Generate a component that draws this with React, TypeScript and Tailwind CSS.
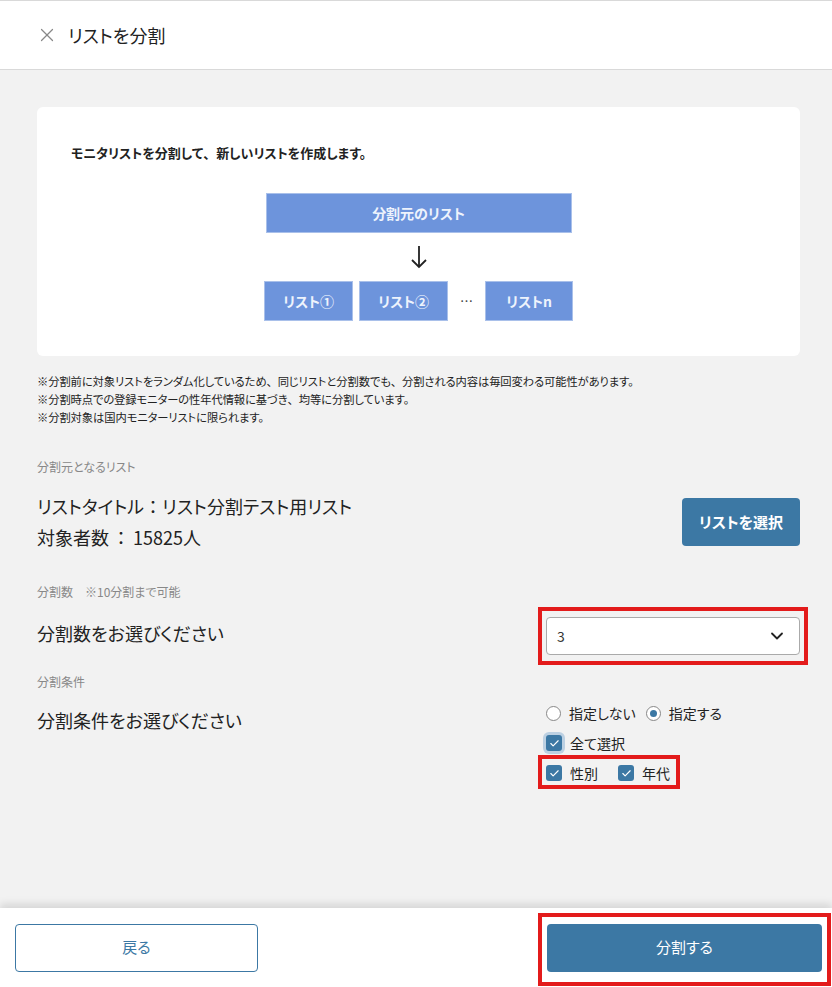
import { X, ChevronDown, Check } from 'lucide-react';

// full-width punctuation kept at full width while the rest uses proportional kana
const P = ({ c }: { c: string }) => <span className="[font-feature-settings:normal]">{c}</span>;

const Box = ({ label, className }: { label: string; className: string }) => (
  <div
    className={`flex items-center justify-center bg-[#6d94dc] border border-[#a9c0ea] text-[14px] font-bold text-[#eef3fc] ${className}`}
  >
    {label}
  </div>
);

const CheckBox = ({ ring }: { ring?: boolean }) => (
  <span
    className={`flex h-[16px] w-[16px] items-center justify-center rounded-[3px] bg-[#3c78a4] ${
      ring ? 'ring-[3px] ring-[#bcd0e2]' : ''
    }`}
  >
    <Check size={11} strokeWidth={2.5} className="text-white" />
  </span>
);

const App = () => {
  return (
    <div
      className="flex h-[987px] w-[832px] flex-col bg-[#f2f2f2] text-[#222] [font-feature-settings:'palt']"
      style={{ fontFamily: '"Noto Sans CJK JP", "Noto Sans", sans-serif' }}
    >
      <header className="flex h-[70px] items-center border-t border-b border-[#d9d9d9] bg-white pl-[36px]">
        <X size={22} strokeWidth={1.3} className="text-[#888]" />
        <h1 className="ml-[10px] text-[18px] leading-none">リストを分割</h1>
      </header>

      <main className="flex-1 pl-[37px] pr-[32px] pt-[37px]">
        <div className="h-[249px] rounded-[6px] bg-white pl-[34px] pt-[36px]">
          <p className="text-[13px] font-bold leading-[20px]">
            モニタリストを分割して<P c="、" />新しいリストを作成します。
          </p>
          <div className="mt-[30px] flex flex-col items-center pr-[34px]">
            <Box label="分割元のリスト" className="h-[40px] w-[306px]" />
            <svg width="18" height="26" viewBox="0 0 18 26" className="my-[11px]">
              <path d="M9 2 V23 M2 16 L9 23 L16 16" stroke="#222" strokeWidth="1.8" fill="none" />
            </svg>
            <div className="flex items-center">
              <Box label="リスト①" className="h-[40px] w-[89px]" />
              <Box label="リスト②" className="ml-[6px] h-[40px] w-[89px]" />
              <span className="mx-[12px] text-[13px] text-[#444]">…</span>
              <Box label="リストn" className="h-[40px] w-[88px]" />
            </div>
          </div>
        </div>

        <div className="mt-[16px] text-[11.3px] leading-[18px] tracking-[-0.1px]">
          <p>
            ※分割前に対象リストをランダム化しているため<P c="、" />同じリストと分割数でも<P c="、" />
            分割される内容は毎回変わる可能性があります。
          </p>
          <p>
            ※分割時点での登録モニターの性年代情報に基づき<P c="、" />均等に分割しています。
          </p>
          <p>※分割対象は国内モニターリストに限られます。</p>
        </div>

        <p className="mt-[32px] text-[12px] leading-[18px] text-[#888]">分割元となるリスト</p>
        <div className="mt-[15px] flex items-center justify-between">
          <div className="text-[18px] leading-[31px]">
            <p>
              リストタイトル<P c="：" />リスト分割テスト用リスト
            </p>
            <p>
              対象者数<span className="mx-[3px]"><P c="：" /></span>15825人
            </p>
          </div>
          <button className="h-[48px] w-[118px] rounded-[4px] bg-[#3c78a4] text-[15px] font-bold text-white">
            リストを選択
          </button>
        </div>

        <p className="mt-[30px] text-[12px] leading-[18px] text-[#888]">
          分割数<span className="ml-[12px]">※10分割まで可能</span>
        </p>
        <div className="mt-[16px] flex items-center justify-between">
          <p className="-mt-[6px] text-[18px] leading-[28px]">分割数をお選びください</p>
          <div className="relative w-[254px]">
            <div className="flex h-[38px] items-center justify-between rounded-[4px] border border-[#aaa] bg-white pl-[10px] pr-[12px]">
              <span className="text-[14px] text-[#333]">3</span>
              <ChevronDown size={20} strokeWidth={2.2} className="text-[#222]" />
            </div>
            <div className="pointer-events-none absolute -inset-x-[8px] -inset-y-[10px] border-4 border-[#e31b1b]" />
          </div>
        </div>

        <p className="mt-[18px] text-[12px] leading-[18px] text-[#888]">分割条件</p>
        <div className="mt-[11px] flex items-start justify-between">
          <p className="mt-[4px] text-[18px] leading-[28px]">分割条件をお選びください</p>
          <div className="flex w-[254px] flex-col gap-[8px] text-[14px]">
            <div className="flex h-[22px] items-center">
              <span className="h-[15px] w-[15px] rounded-full border border-[#888] bg-white" />
              <span className="ml-[8px]">指定しない</span>
              <span className="ml-[10px] flex h-[15px] w-[15px] items-center justify-center rounded-full border border-[#888] bg-white">
                <span className="h-[7px] w-[7px] rounded-full bg-[#3c78a4]" />
              </span>
              <span className="ml-[8px]">指定する</span>
            </div>
            <div className="flex h-[22px] items-center">
              <CheckBox ring />
              <span className="ml-[8px]">全て選択</span>
            </div>
            <div className="relative flex h-[22px] items-center self-start">
              <CheckBox />
              <span className="ml-[8px]">性別</span>
              <span className="ml-[20px]">
                <CheckBox />
              </span>
              <span className="ml-[8px]">年代</span>
              <div className="pointer-events-none absolute -left-[8px] -right-[10px] -top-[7px] -bottom-[5px] border-4 border-[#e31b1b]" />
            </div>
          </div>
        </div>
      </main>

      <footer className="flex h-[79px] items-center justify-between bg-white pl-[15px] pr-[10px] shadow-[0_-4px_8px_rgba(0,0,0,0.12)]">
        <button className="h-[48px] w-[243px] rounded-[4px] border border-[#3c78a4] bg-white text-[15px] text-[#3c78a4]">
          戻る
        </button>
        <div className="relative">
          <button className="h-[48px] w-[275px] rounded-[4px] bg-[#3c78a4] text-[15px] text-white">
            分割する
          </button>
          <div className="pointer-events-none absolute -left-[9px] -right-[9px] -top-[11px] -bottom-[14px] border-4 border-[#e31b1b]" />
        </div>
      </footer>
    </div>
  );
};

export default App;
